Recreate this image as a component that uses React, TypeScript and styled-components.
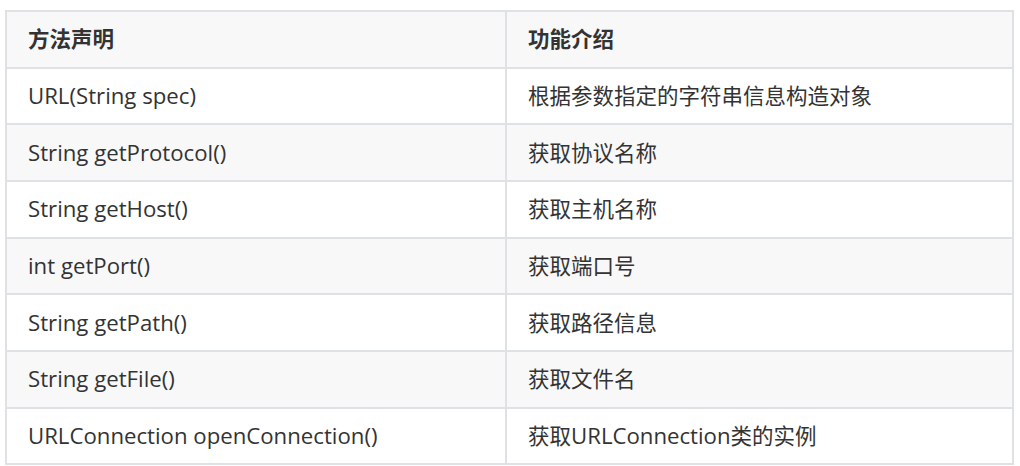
import React from "react";
import styled, { createGlobalStyle } from "styled-components";

const Global = createGlobalStyle`
  html, body { margin: 0; padding: 0; background: #ffffff; }
  body { font-family: "Open Sans", "Noto Sans CJK SC", sans-serif; color: #333333; }
`;

const Page = styled.div`
  padding: 10px 6px 0 5px;
`;

const Table = styled.table`
  width: 1009px;
  border-collapse: separate;
  border-spacing: 0;
  border-top: 2px solid #dfe2e5;
  border-left: 2px solid #dfe2e5;
  table-layout: fixed;
`;

const Row = styled.tr<{ $striped?: boolean }>`
  background: ${(p) => (p.$striped ? "#f8f8f8" : "#ffffff")};
`;

const HeadCell = styled.th`
  text-align: left;
  font-weight: 700;
  font-size: 21.5px;
  line-height: 32px;
  padding: 11.33px 20px 11.34px 21px;
  border-right: 2px solid #dfe2e5;
  border-bottom: 2px solid #dfe2e5;
  color: #333333;
`;

const Cell = styled.td<{ $latin?: boolean }>`
  font-size: ${(p) => (p.$latin ? "22.2px" : "21.5px")};
  line-height: 32px;
  padding: 11.33px 20px 11.34px 21px;
  border-right: 2px solid #dfe2e5;
  border-bottom: 2px solid #dfe2e5;
  color: #333333;
  white-space: nowrap;
`;

const Latin = styled.span`
  font-size: 22.2px;
`;

const rows: [string, React.ReactNode][] = [
  ["URL(String spec)", "根据参数指定的字符串信息构造对象"],
  ["String getProtocol()", "获取协议名称"],
  ["String getHost()", "获取主机名称"],
  ["int getPort()", "获取端口号"],
  ["String getPath()", "获取路径信息"],
  ["String getFile()", "获取文件名"],
  [
    "URLConnection openConnection()",
    <>
      获取<Latin>URLConnection</Latin>类的实例
    </>,
  ],
];

export default function App() {
  return (
    <>
      <Global />
      <Page>
        <Table>
          <colgroup>
            <col style={{ width: 500 }} />
            <col />
          </colgroup>
          <thead>
            <Row $striped>
              <HeadCell>方法声明</HeadCell>
              <HeadCell>功能介绍</HeadCell>
            </Row>
          </thead>
          <tbody>
            {rows.map(([m, d], i) => (
              <Row key={m} $striped={i % 2 === 1}>
                <Cell $latin>{m}</Cell>
                <Cell>{d}</Cell>
              </Row>
            ))}
          </tbody>
        </Table>
      </Page>
    </>
  );
}
